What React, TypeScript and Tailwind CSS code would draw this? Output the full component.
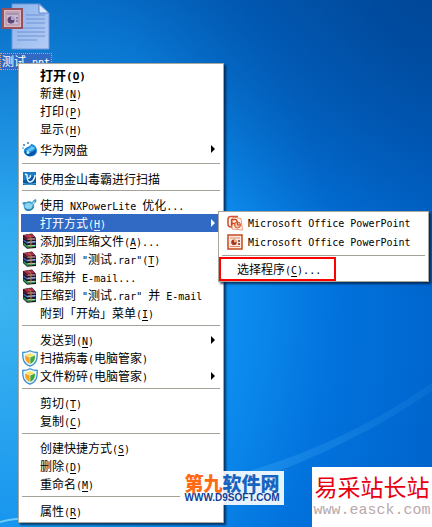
import React, { Fragment } from "react";

const CJK = "text-[12px] font-['Noto_Sans_CJK_SC','Liberation_Sans',sans-serif]";
const LATIN = "text-[10px] font-['DejaVu_Sans_Mono','Noto_Sans_CJK_SC',monospace]";
const CJK_BOLD = "text-[13px] font-bold font-['Noto_Sans_CJK_SC','Liberation_Sans',sans-serif]";
const LATIN_BOLD = "text-[11px] font-bold font-['DejaVu_Sans_Mono','Noto_Sans_CJK_SC',monospace]";

/** Sets CJK runs and Latin runs in their own faces, like a bitmap UI font does. */
function Mixed({ text, bold = false }: { text: string; bold?: boolean }) {
  const runs = text.match(/[\x20-\x7e]+|[^\x20-\x7e]+/g) ?? [];
  return (
    <>
      {runs.map((run, i) => {
        const latin = /^[\x20-\x7e]/.test(run);
        const face = latin ? (bold ? LATIN_BOLD : LATIN) : bold ? CJK_BOLD : CJK;
        return (
          <span key={i} className={face}>
            {run}
          </span>
        );
      })}
    </>
  );
}

function Key({ letter, bold = false }: { letter: string; bold?: boolean }) {
  return (
    <span className={bold ? LATIN_BOLD : LATIN}>
      (<u className="underline-offset-2">{letter}</u>)
    </span>
  );
}

function DropIcon() {
  return (
    <svg viewBox="0 0 16 16" className="size-4" aria-hidden="true">
      <path d="M9 3C8.600 6 3 6 2 9c-1 4 3 6.500 6.500 6.500C12.500 15.500 15 13 15 9.800 15 6 12 3 9 3z" fill="#1a86d4" />
      <path d="M3 10c3 3 8 2 11-2 .500 5-3 7-6 7s-5-2-5-5z" fill="#0754a6" />
      <path d="M9 5c0 2-4 3-5 5 3 1 7 0 9-3-1-1-2-2-4-2z" fill="#62c4f4" />
      <circle cx="6" cy="11.500" r="1.500" fill="#b6ecff" />
      <circle cx="2" cy="4" r="1" fill="#3b83b5" />
      <circle cx="6" cy="2" r="1" fill="#3b83b5" />
      <circle cx="1" cy="7" r="1" fill="#71bfe5" />
    </svg>
  );
}

function AntivirusIcon() {
  return (
    <svg viewBox="0 0 16 16" className="size-4" aria-hidden="true">
      <rect x="1" y="2" width="13" height="13" fill="#0b55a0" />
      <path d="M1 2h13v5C9 4 5 12 1 10z" fill="#1b7cc6" />
      <path d="M3 4l2 1c0 4 1 7 3 7s5-3 5-7M6 8c2 1 3-2 2-3" fill="none" stroke="#e5f9ff" strokeWidth="1.500" />
      <path d="M1 13.500c4 1 9 1 13 0" stroke="#56b8ed" fill="none" />
    </svg>
  );
}

function OptimizeIcon() {
  return (
    <svg viewBox="0 0 16 16" className="size-4" aria-hidden="true">
      <path d="M0 5.500C2 4.500 3 5 4.500 5c1.500-1 4-1 5.500.500L11.500 3 14 2l.500 2.500L12 7c1 4-1.500 7-5.500 7-3 0-5-2-4.800-5.500z" fill="#3f9dc9" />
      <ellipse cx="6.500" cy="9" rx="3.800" ry="3" fill="#8dd6ef" />
      <path d="M10 7l2-3 1 1-2 3z" fill="#9fdcf2" />
      <path d="M3 11.500c2 2.500 7 2.500 8.500-1.500" fill="none" stroke="#21709f" />
    </svg>
  );
}

function RarIcon() {
  return (
    <svg viewBox="0 0 16 16" className="size-4" aria-hidden="true">
      <path d="M1 2l9-1.500L14 5v10l-9 .800L1 12z" fill="#1d1620" />
      <path d="M1.500 2.300L10 1l3 3-8 1z" fill="#b52a4e" />
      <path d="M1.500 3.500L5 6l8.500-1v1.300L5 7.300 1.500 4.800z" fill="#7f1c3a" />
      <path d="M5.500 6h8" stroke="#efd9dc" strokeWidth=".8" />
      <path d="M1.500 6.500L5 9l8.500-.8v1.400L5 10.600 1.500 8z" fill="#4a6bd0" />
      <path d="M5.500 9.200l8-.5" stroke="#dfe5fa" strokeWidth=".8" />
      <path d="M1.500 9.500L5 12.500l8.500-.5v1.800L5 14.800 1.500 11.500z" fill="#2a9a55" />
      <path d="M5.500 12.700l8-.4" stroke="#e0f2d6" strokeWidth=".8" />
      <path d="M6 1.600L9 4.500v10" fill="none" stroke="#b98a3a" />
    </svg>
  );
}

function ShieldIcon() {
  return (
    <svg viewBox="0 0 16 17" className="h-[17px] w-4" aria-hidden="true">
      <path d="M8 .8C6 2 3 2.500.8 2.500c-.3 7 .7 11 7.200 13.700 6.500-2.700 7.500-6.700 7.200-13.700C13 2.500 10 2 8 .8z" fill="#eaf7ff" stroke="#3e8fc6" strokeWidth="1.300" />
      <path d="M8 3.200l4.700 1.700L8 7 3.300 4.900z" fill="#ffe45b" />
      <path d="M3 5.400l4.700 2v6.400C4.300 12 3 10 3 5.400z" fill="#f6a11f" />
      <path d="M13 5.400l-4.700 2v6.400C11.700 12 13 10 13 5.400z" fill="#43a832" />
    </svg>
  );
}

function PowerPointIcon() {
  return (
    <svg viewBox="0 0 16 16" className="size-4" aria-hidden="true">
      <path d="M6 2l8 1.500L15.500 15 5 14z" fill="#fff3e9" stroke="#e79b7a" />
      <path d="M11 1.500H4Q1 1.500 1 4.500V9q0 3 3 3h1" fill="none" stroke="#d4552d" strokeWidth="1.600" />
      <path d="M4.500 11V4.500H8a2 2 0 010 4H5" fill="none" stroke="#cc4822" strokeWidth="1.400" />
      <circle cx="10.500" cy="10" r="3" fill="#f5c3aa" stroke="#d4552d" />
      <path d="M10.500 10V7M10.500 10h3" stroke="#c64523" />
    </svg>
  );
}

function PowerPointClassicIcon() {
  return (
    <svg viewBox="0 0 16 16" className="size-4" aria-hidden="true">
      <rect x="1" y="1" width="14" height="14" fill="#fbe8df" stroke="#c9542c" strokeWidth="1.600" />
      <path d="M3 4h10M3 12.500h10" stroke="#dd8a69" />
      <circle cx="7" cy="8.300" r="2.800" fill="#a83b1d" />
      <path d="M7 8.300V5.500a2.800 2.800 0 012.800 2.800z" fill="#f2b093" />
      <path d="M11 7h2M11 10h2" stroke="#7e2c18" strokeWidth="1.400" />
    </svg>
  );
}

function PresentationFile() {
  return (
    <svg viewBox="0 0 48 47" className="h-[47px] w-12" aria-hidden="true">
      <defs>
        <linearGradient id="sheet" x1="0" y1="0" x2="1" y2="1">
          <stop offset="0" stopColor="#8db4ea" />
          <stop offset="1" stopColor="#b4cbf5" />
        </linearGradient>
      </defs>
      <path d="M10 1h28l9 9v36H10z" fill="url(#sheet)" stroke="#6f96da" />
      <path d="M37 1v9h10z" fill="#dbe9ff" stroke="#5f86ce" />
      <path d="M24 12h19M24 16h19M24 20h19M15 25h28M15 29h28M15 33h28M15 37h20" stroke="#6f92d3" />
      <rect x="1" y="6" width="19" height="19" fill="#d4bcc8" stroke="#9a4f5d" strokeWidth="2" />
      <rect x="4" y="9" width="13" height="13" fill="#c7bad5" stroke="#b78a9b" />
      <path d="M5 11h11" stroke="#856a8d" />
      <circle cx="9" cy="17" r="3.500" fill="#5b4672" />
      <path d="M9 17v-3.500a3.500 3.500 0 013.500 3.500z" fill="#b4a3c8" />
      <path d="M14 15h2M14 18h2" stroke="#5b4672" />
    </svg>
  );
}

type Item = {
  text: string;
  accel?: string;
  tail?: string;
  icon?: () => React.JSX.Element;
  arrow?: boolean;
  bold?: boolean;
  selected?: boolean;
  tall?: boolean;
};

const groups: Item[][] = [
  [
    { text: "打开", accel: "O", bold: true },
    { text: "新建", accel: "N" },
    { text: "打印", accel: "P" },
    { text: "显示", accel: "H" },
    { text: "华为网盘", icon: DropIcon, arrow: true, tall: true },
  ],
  [{ text: "使用金山毒霸进行扫描", icon: AntivirusIcon }],
  [
    { text: "使用 NXPowerLite 优化...", icon: OptimizeIcon },
    { text: "打开方式", accel: "H", arrow: true, selected: true },
    { text: "添加到压缩文件", accel: "A", tail: "...", icon: RarIcon },
    { text: '添加到 "测试.rar"', accel: "T", icon: RarIcon },
    { text: "压缩并 E-mail...", icon: RarIcon },
    { text: '压缩到 "测试.rar" 并 E-mail', icon: RarIcon },
    { text: "附到「开始」菜单", accel: "I" },
  ],
  [
    { text: "发送到", accel: "N", arrow: true },
    { text: "扫描病毒(电脑管家)", icon: ShieldIcon },
    { text: "文件粉碎(电脑管家)", icon: ShieldIcon, arrow: true },
  ],
  [
    { text: "剪切", accel: "T" },
    { text: "复制", accel: "C" },
  ],
  [
    { text: "创建快捷方式", accel: "S" },
    { text: "删除", accel: "D" },
    { text: "重命名", accel: "M" },
  ],
  [{ text: "属性", accel: "R" }],
];

function Separator() {
  return (
    <div role="separator" className="h-[9px] px-px pt-[3px]">
      <div className="h-px bg-[#a5a29a]" />
    </div>
  );
}

function MenuRow({ item }: { item: Item }) {
  const Icon = item.icon;
  const height = item.tall ? "h-[22px]" : "h-[18px]";
  const tone = item.selected ? "bg-[#316ac5] text-white" : "text-black";
  return (
    <button type="button" role="menuitem" className={`flex w-full items-center pr-1.5 pl-px text-left ${height} ${tone}`}>
      <span className="flex w-[18px] shrink-0 items-center">{Icon && <Icon />}</span>
      <span className="flex-1 whitespace-pre leading-[18px]">
        <Mixed text={item.text} bold={item.bold} />
        {item.accel && <Key letter={item.accel} bold={item.bold} />}
        {item.tail && <Mixed text={item.tail} />}
      </span>
      {item.arrow && (
        <svg viewBox="0 0 4 8" className="h-2 w-1" aria-hidden="true">
          <path d="M0 0l4 4-4 4z" fill="currentColor" />
        </svg>
      )}
    </button>
  );
}

function ContextMenu() {
  return (
    <div role="menu" className="absolute top-[63px] left-[18px] w-[206px] border border-[#aaa89d] bg-white p-0.5 shadow-[2px_2px_2px_rgba(0,20,50,0.7)]">
      {groups.map((items, i) => (
        <Fragment key={i}>
          {i > 0 && <Separator />}
          {items.map((item) => (
            <MenuRow key={item.text} item={item} />
          ))}
        </Fragment>
      ))}
    </div>
  );
}

function OpenWithMenu() {
  return (
    <div role="menu" className="absolute top-[211px] left-[218px] w-[211px] border border-[#aaa89d] bg-white pt-px shadow-[2px_2px_2px_rgba(0,20,50,0.7)]">
      {[PowerPointIcon, PowerPointClassicIcon].map((Icon, i) => (
        <button key={i} type="button" role="menuitem" className="flex h-[19px] w-full items-center gap-[5px] pl-2 text-left whitespace-pre">
          <Icon />
          <span className="leading-[18px]">
            <Mixed text="Microsoft Office PowerPoint" />
          </span>
        </button>
      ))}
      <div role="separator" className="h-1.5 px-[3px] pt-1">
        <div className="h-px bg-[#a5a29a]" />
      </div>
      <button type="button" role="menuitem" className="flex h-6 w-[117px] items-center border-2 border-[#ff0000] pl-4 text-left whitespace-pre">
        <span className="leading-[18px]">
          <Mixed text="选择程序" />
          <Key letter="C" />
          <Mixed text="..." />
        </span>
      </button>
    </div>
  );
}

function Wallpaper() {
  return (
    <svg viewBox="0 0 432 527" preserveAspectRatio="none" className="absolute inset-0 size-full" aria-hidden="true">
      <defs>
        <linearGradient id="beam" x1="0" x2="1">
          <stop offset="0" stopColor="#5cc0ff" stopOpacity="0.25" />
          <stop offset="1" stopColor="#5cc0ff" stopOpacity="0.08" />
        </linearGradient>
      </defs>
      <path d="M224 478Q340 448 432 383v8Q340 454 224 490z" fill="url(#beam)" />
      <path d="M0 522Q18 517 60 518" fill="none" stroke="#8fe0ff" strokeWidth="2" opacity="0.7" />
    </svg>
  );
}

export default function App() {
  return (
    <main className="relative min-h-screen overflow-hidden bg-[linear-gradient(to_bottom,rgba(0,58,128,0.35),rgba(0,58,128,0)_220px),radial-gradient(ellipse_300px_300px_at_100%_0,rgba(0,58,128,0.5),rgba(0,58,128,0)),radial-gradient(ellipse_480px_600px_at_0_300px,#3cb4f0_0%,#0c8cee_50%,#0272dc_70%,#0064cc_95%)]">
      <Wallpaper />
      <button type="button" className="absolute top-[3px] left-0 flex w-[52px] flex-col items-center gap-[3px]">
        <PresentationFile />
        <span className="w-full border border-dotted border-[#d8a070] bg-[#316ac5] pl-px text-left leading-[12px] whitespace-pre text-white">
          <Mixed text="测试.ppt" />
        </span>
      </button>
      <ContextMenu />
      <OpenWithMenu />
      <aside className="absolute right-[148px] bottom-[22px] flex h-[34px] w-[104px] flex-col items-center bg-white/90 pt-0.5">
        <p className="font-['Noto_Sans_CJK_SC',sans-serif] text-[19px] leading-[19px] font-black whitespace-nowrap text-[#1764c0]">
          <span className="text-[#ff6a13]">第九</span>软件网
        </p>
        <p className="font-['Liberation_Sans',sans-serif] text-[10px] leading-[12px] font-bold whitespace-nowrap text-[#123f96]">WWW.D9SOFT.COM</p>
      </aside>
      <aside className="absolute right-0 bottom-0 flex h-[60px] w-[120px] flex-col items-center bg-white pt-1.5">
        <p className="font-['Noto_Sans_CJK_SC',sans-serif] text-[23px] leading-[26px] whitespace-nowrap text-[#e60012]">易采站长站</p>
        <p className="font-['Liberation_Mono',monospace] text-[15px] leading-6 whitespace-nowrap text-[#b9a9ab]">www.easck.com</p>
      </aside>
    </main>
  );
}
